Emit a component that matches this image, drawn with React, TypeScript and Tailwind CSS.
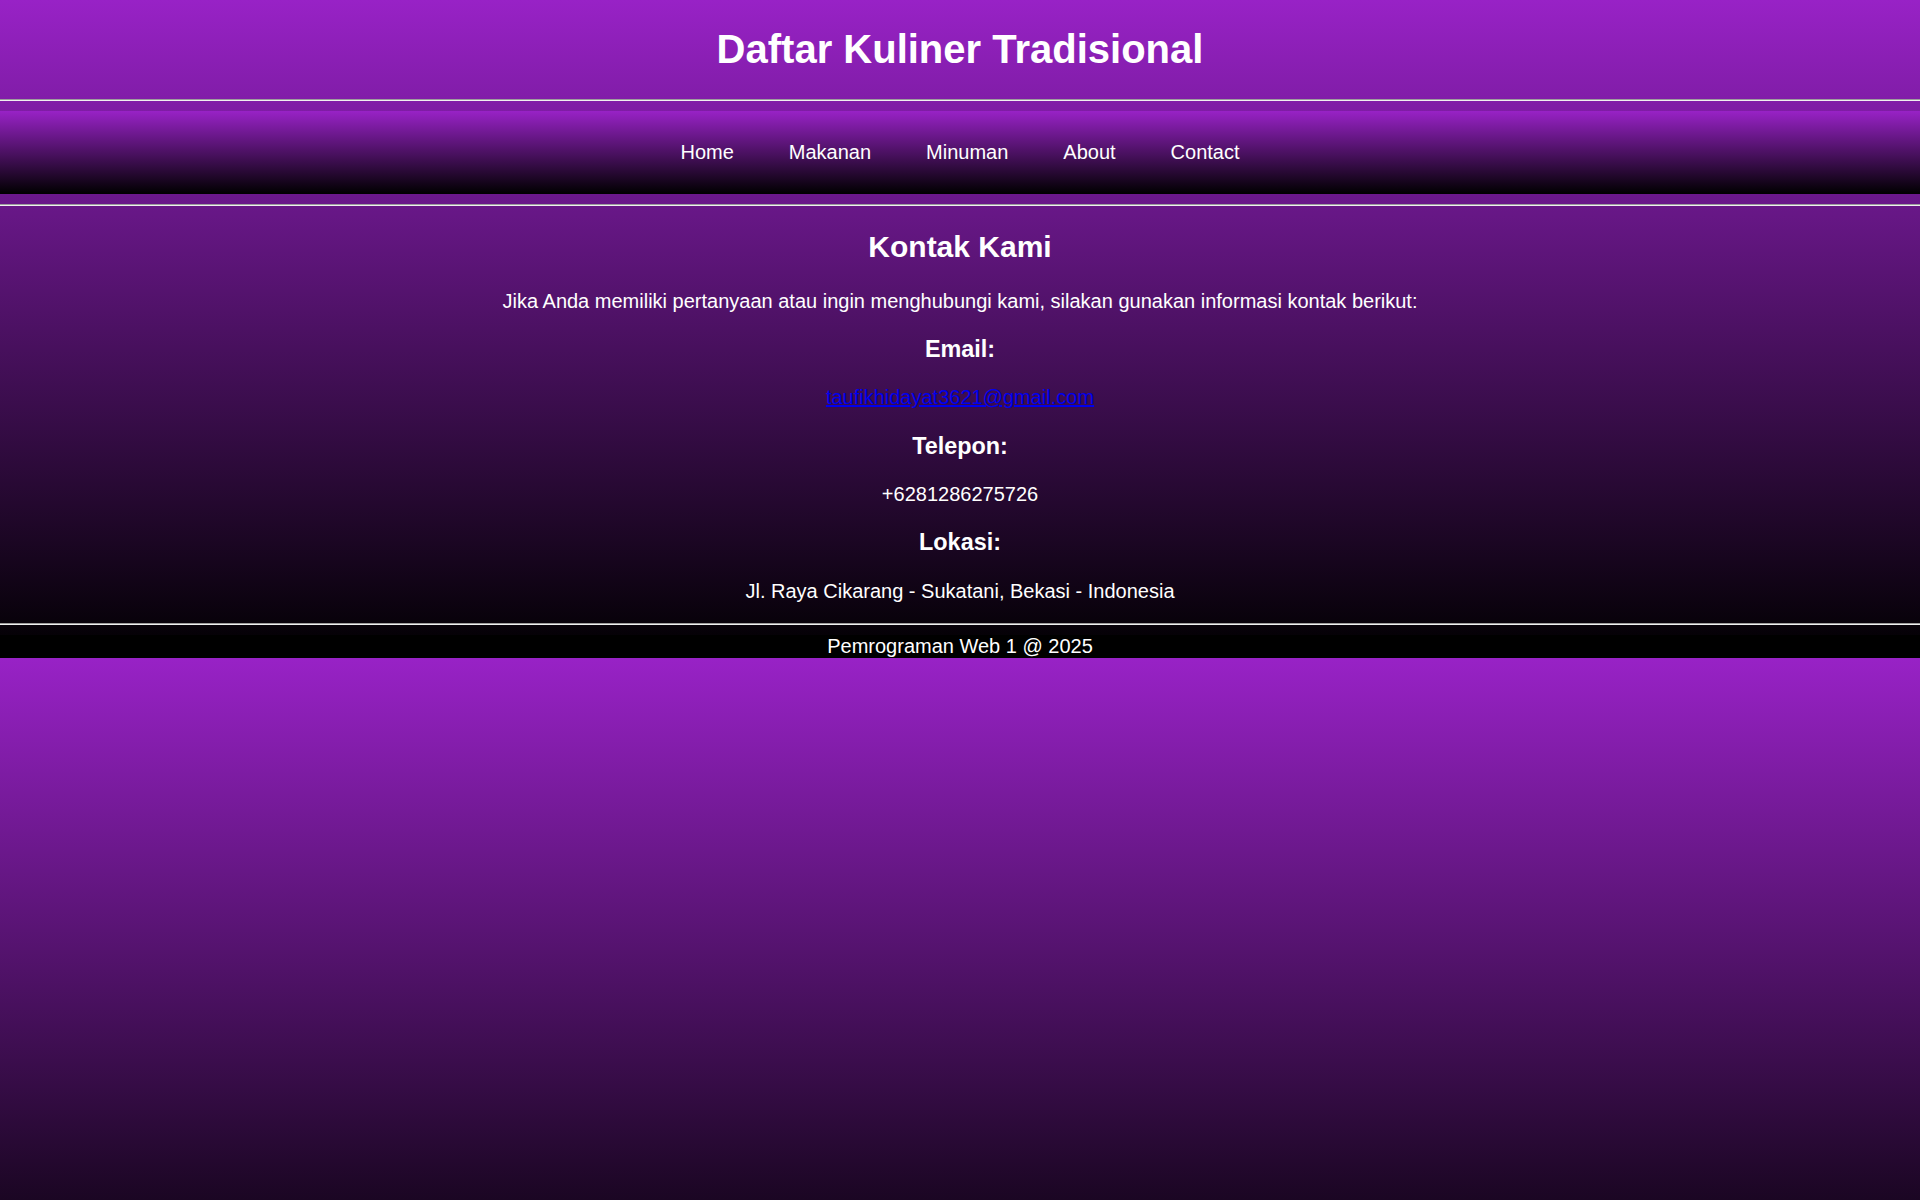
export default function App() {
  const menu = ['Home', 'Makanan', 'Minuman', 'About', 'Contact'];

  return (
    <div className="min-h-screen bg-[linear-gradient(#9822c6,#000)] bg-[length:100%_658px] bg-repeat-y text-white font-['Liberation_Sans',Arial,sans-serif] text-[20px]">
      <header className="text-center pt-[26px] pb-[27px]">
        <h1 className="text-[40px] leading-[46px] font-bold">Daftar Kuliner Tradisional</h1>
      </header>
      <hr className="border-0 border-t border-b border-t-[#9d9d9d] border-b-[#f0f0f0]" />

      <nav className="mt-[10px] mb-[10px] h-[83px] bg-[linear-gradient(#9822c6,#000)] flex items-center justify-center gap-[55px]">
        {menu.map((item) => (
          <a key={item} href="#" className="text-white leading-[23px]">
            {item}
          </a>
        ))}
      </nav>
      <hr className="border-0 border-t border-b border-t-[#9d9d9d] border-b-[#f0f0f0]" />

      <main className="text-center">
        <h2 className="mt-[24px] text-[30px] leading-[34.5px] font-bold">Kontak Kami</h2>
        <p className="mt-[25px] leading-[23px]">
          Jika Anda memiliki pertanyaan atau ingin menghubungi kami, silakan gunakan informasi kontak berikut:
        </p>
        <h3 className="mt-[23.4px] text-[23.4px] leading-[27px] font-bold">Email:</h3>
        <p className="mt-[23.4px] leading-[23px]">
          <a href="mailto:taufikhidayat3621@gmail.com" className="text-[#0000ee] underline">
            taufikhidayat3621@gmail.com
          </a>
        </p>
        <h3 className="mt-[23.4px] text-[23.4px] leading-[27px] font-bold">Telepon:</h3>
        <p className="mt-[23.4px] leading-[23px]">+6281286275726</p>
        <h3 className="mt-[23.4px] text-[23.4px] leading-[27px] font-bold">Lokasi:</h3>
        <p className="mt-[23.4px] mb-[20px] leading-[23px]">Jl. Raya Cikarang - Sukatani, Bekasi - Indonesia</p>
      </main>
      <hr className="border-0 border-t border-b border-t-[#9d9d9d] border-b-[#f0f0f0]" />

      <footer className="mt-[10px] bg-black text-center leading-[23px]">Pemrograman Web 1 @ 2025</footer>
    </div>
  );
}
